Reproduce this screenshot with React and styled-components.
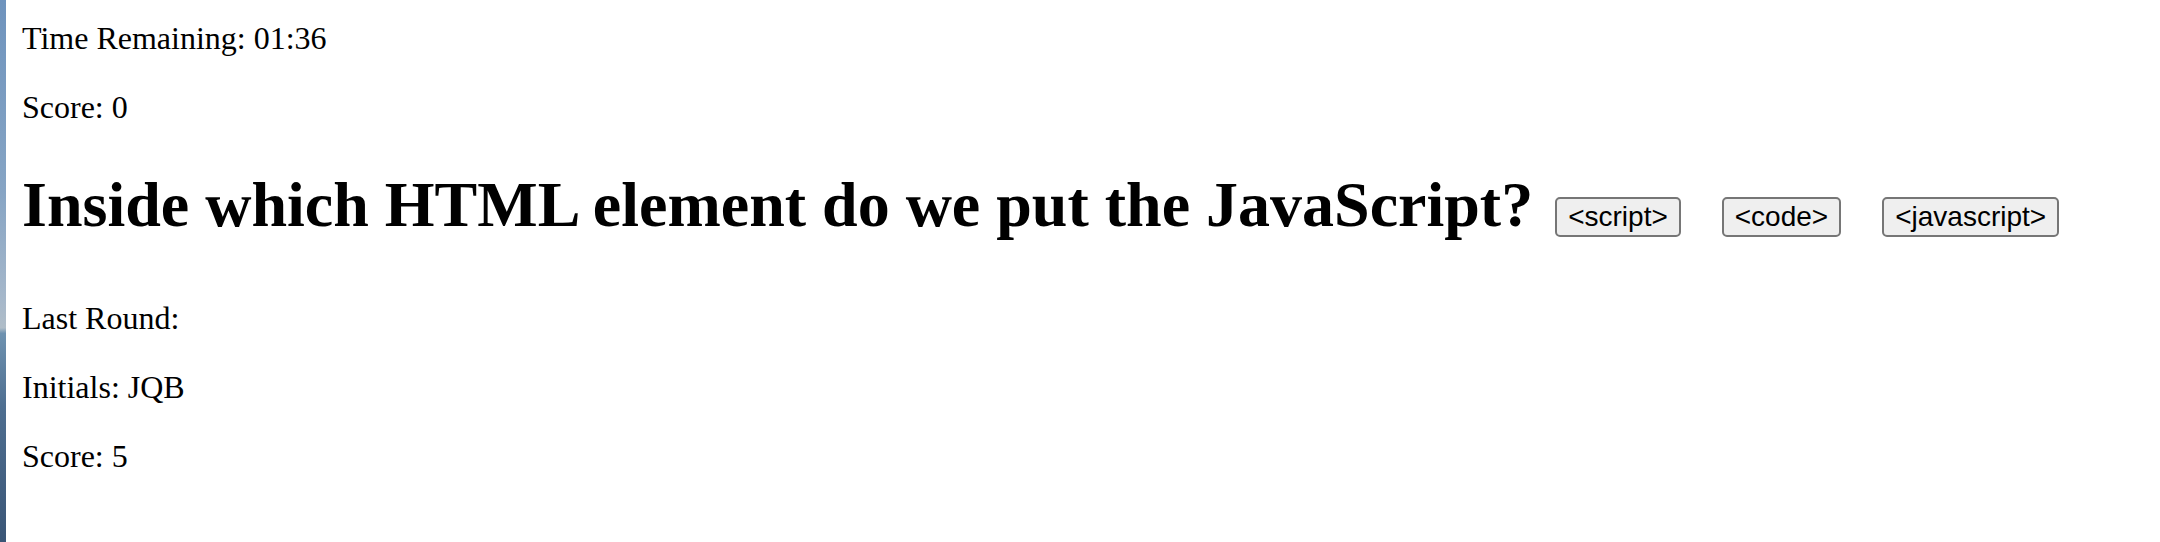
import React from "react";
import styled, { createGlobalStyle } from "styled-components";

const GlobalStyle = createGlobalStyle`
  html, body {
    margin: 0;
    padding: 0;
    background: #fff;
  }
`;

const Page = styled.div`
  display: flex;
  min-height: 100vh;
  font-family: "Liberation Serif", "Times New Roman", serif;
  color: #000;
`;

const DesktopEdge = styled.div`
  flex: 0 0 6px;
  background: linear-gradient(
    180deg,
    #6e93bd 0%,
    #86a4c4 35%,
    #a5b7ca 55%,
    #b0bdc8 60.5%,
    #6e92b0 61.5%,
    #4e6e90 75%,
    #3a5576 100%
  );
`;

const Content = styled.main`
  display: flex;
  flex-direction: column;
  align-items: flex-start;
  padding: 20px 16px 0;
`;

const Stat = styled.p`
  margin: ${(p) => p.$gap || 0}px 0 0;
  font-size: 32px;
  line-height: normal;
`;

const QuestionRow = styled.div`
  display: flex;
  align-items: baseline;
  margin-top: 42px;
`;

const Question = styled.h1`
  margin: 0;
  font-size: 64px;
  font-weight: bold;
  line-height: normal;
  white-space: nowrap;
`;

const Answers = styled.div`
  display: flex;
  align-items: baseline;
  gap: 41px;
  margin-left: 22px;
`;

const AnswerButton = styled.button`
  font-family: "Liberation Sans", Arial, sans-serif;
  font-size: 28px;
  line-height: normal;
  color: #000;
  background: #efefef;
  border: 2px solid #767676;
  border-radius: 5px;
  padding: 2px 11px;
  cursor: pointer;
`;

const LastRound = styled.section`
  display: flex;
  flex-direction: column;
  margin-top: 58px;
`;

const answers = ["<script>", "<code>", "<javascript>"];

export default function App() {
  return (
    <>
      <GlobalStyle />
      <Page>
        <DesktopEdge />
        <Content>
          <Stat>Time Remaining: 01:36</Stat>
          <Stat $gap={32}>Score: 0</Stat>
          <QuestionRow>
            <Question>Inside which HTML element do we put the JavaScript?</Question>
            <Answers>
              {answers.map((a) => (
                <AnswerButton key={a}>{a}</AnswerButton>
              ))}
            </Answers>
          </QuestionRow>
          <LastRound>
            <Stat>Last Round:</Stat>
            <Stat $gap={32}>Initials: JQB</Stat>
            <Stat $gap={32}>Score: 5</Stat>
          </LastRound>
        </Content>
      </Page>
    </>
  );
}
